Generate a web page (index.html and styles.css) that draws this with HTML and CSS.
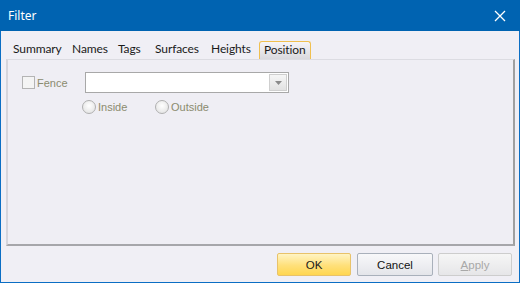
FILE: index.html
```html
<!DOCTYPE html>
<html>
<head>
<meta charset="utf-8">
<link rel="stylesheet" href="styles.css">
</head>
<body>
<div class="window">
  <div class="titlebar">
    <span class="title">Filter</span>
    <svg class="close" width="12" height="12" viewBox="0 0 12 12"><path d="M1 1L11 11M11 1L1 11" stroke="#fff" stroke-width="1.3"/></svg>
  </div>
  <div class="body">
    <div class="tabs">
      <span class="tab t1">Summary</span>
      <span class="tab t2">Names</span>
      <span class="tab t3">Tags</span>
      <span class="tab t4">Surfaces</span>
      <span class="tab t5">Heights</span>
      <span class="tab active">Position</span>
    </div>
    <div class="panel">
      <div class="row1">
        <label class="check"><span class="box"></span><span class="lbl">Fence</span></label>
        <div class="combo"><span class="drop"><svg width="7" height="4" viewBox="0 0 7 4"><path d="M0 0H7L3.5 4Z" fill="#8a8a8a"/></svg></span></div>
      </div>
      <div class="row2">
        <label class="radio r1"><span class="circle"></span><span class="lbl">Inside</span></label>
        <label class="radio"><span class="circle"></span><span class="lbl">Outside</span></label>
      </div>
    </div>
    <div class="buttons">
      <button class="btn ok">OK</button>
      <button class="btn cancel">Cancel</button>
      <button class="btn apply"><u>A</u>pply</button>
    </div>
  </div>
</div>
</body>
</html>
```

FILE: styles.css
```css
html, body { margin: 0; padding: 0; }
body { width: 520px; height: 283px; overflow: hidden; font-family: "Noto Sans", "Open Sans", sans-serif; }
.window { width: 520px; height: 283px; box-sizing: border-box; border: 1px solid #0b6ec4; border-top: none; background: #f0eff5; display: flex; flex-direction: column; }
.titlebar { height: 31px; background: #0063b1; display: flex; align-items: center; justify-content: space-between; padding: 0 14px 0 8px; margin: 0 -1px; color: #fff; }
.title { font-size: 12px; }
.close { display: block; }
.body { flex: 1; display: flex; flex-direction: column; padding: 0 4px 0 4px; }
.tabs { display: flex; height: 28px; align-items: flex-end; padding-left: 8px; }
.tab { font-family: Lato, "Noto Sans", sans-serif; font-size: 12px; letter-spacing: -0.1px; color: #1a1a1a; padding: 0 0 2px 0; line-height: 16px; box-sizing: border-box; }
.t1 { width: 59px; }
.t2 { width: 46px; }
.t3 { width: 37px; }
.t4 { width: 56px; }
.t5 { width: 48px; }
.tab.active { border: 1px solid #f0c050; border-bottom: none; border-radius: 3px 3px 0 0; background: linear-gradient(#f6f4f8, #d9d9de); padding: 0 4px 1px 4px; width: 52px; }
.panel { height: 187px; box-sizing: border-box; margin: 0 0 0 1px; border-top: 1px solid #dcdce2; border-left: 2px solid #d5d5dc; border-right: 2px solid #a0a0a0; border-bottom: 2px solid #a6a6aa; background: #efeef4; padding: 12px 0 0 14px; }
.row1 { display: flex; align-items: center; }
.check { display: flex; align-items: center; width: 64px; }
.box { width: 11px; height: 11px; border: 1px solid #b4b4b4; background: #f4f4f4; margin-right: 2px; }
.lbl { font-family: "Liberation Sans", Arial, sans-serif; font-size: 11px; color: #8b8b6e; }
.combo { width: 201px; height: 19px; margin-left: -1px; border: 1px solid #a8a8a8; background: #fff; display: flex; justify-content: flex-end; align-items: center; padding-right: 1px; }
.drop { width: 16px; height: 15px; border: 1px solid #cfcfcf; background: linear-gradient(#f6f6f6, #e2e2e2); display: flex; align-items: center; justify-content: center; }
.drop svg { display: block; }
.row2 { display: flex; padding-left: 60px; margin-top: 7px; }
.r1 { width: 73px; }
.radio { display: flex; align-items: center; }
.circle { width: 12px; height: 12px; border-radius: 50%; border: 1px solid #b0b0b0; background: radial-gradient(circle at 50% 40%, #ffffff, #dedede); margin-right: 2px; }
.buttons { display: flex; justify-content: flex-end; gap: 5px; padding: 7px 3px 0 0; }
.btn { width: 74px; height: 23px; font-family: "Liberation Sans", Arial, sans-serif; font-size: 11.5px; border-radius: 2px; padding: 0; }
.ok { margin-right: 1px; border: 1px solid #e8c26a; background: linear-gradient(#fff4c4, #ffe07a 55%, #ffd650); color: #1a1a1a; }
.cancel { width: 76px; border: 1px solid #a9b0bb; background: linear-gradient(#f8f8fa, #e4e5ea); color: #111; }
.apply { border: 1px solid #cdcdcd; background: linear-gradient(#f6f6f6, #e6e6e8); color: #a8a8a8; }
.apply u { text-decoration: underline; }
```
